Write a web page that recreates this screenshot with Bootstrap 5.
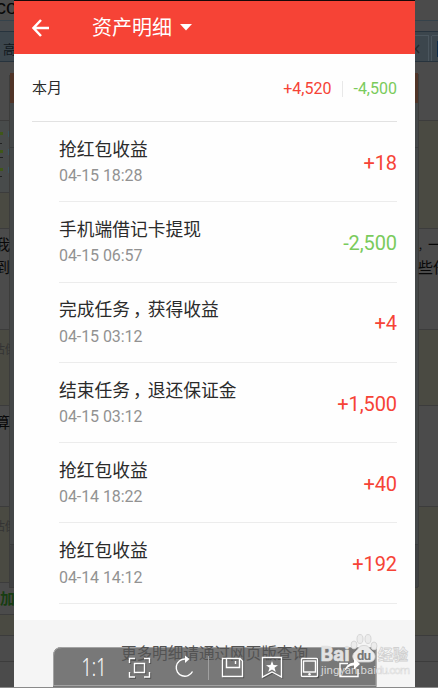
<!DOCTYPE html>
<html lang="zh-CN">
<head>
<meta charset="utf-8">
<meta name="viewport" content="width=device-width, initial-scale=1">
<title>资产明细</title>
<link href="https://cdn.jsdelivr.net/npm/bootstrap@5.3.0/dist/css/bootstrap.min.css" rel="stylesheet">
<style>
body{width:438px;height:688px;overflow:hidden;background:#4b4b4b;font-family:Roboto,"Noto Sans CJK SC",sans-serif;color:#2b2b2b}
.backdrop-art{width:438px;height:688px}
.phone{width:401px;height:687px;margin-left:14px;background:#fefefe}
.top-bar{height:54px;background:#f64336;border-top:1px solid #160808;padding-left:17px}
.top-title{font-size:20px;line-height:28px;margin-left:42px;padding-top:1px}
.caret-icon{margin-left:8px}
.summary{height:68px;margin:0 18px;padding-top:2px;border-bottom:1px solid #e2e2e2;font-size:15px}
.sum-num{font-size:16px}
.divider{width:1px;height:16px;background:#e8e8e8;margin:0 10px 0 11px}
.entry{height:80.3px;margin:0 18px 0 45px;border-bottom:1px solid #ececec}
.entry-title{font-size:17.75px;line-height:26px;height:26px;margin-top:14.9px}
.entry-time{font-size:16px;line-height:24px;color:#929292;margin-top:1.3px;letter-spacing:-.08px}
.amount{font-size:20px;line-height:24px;margin-top:2px;letter-spacing:-.1px}
.plus{color:#f64336}
.minus{color:#7acb5c}
.comma{display:inline-block;width:17.75px;text-indent:3px;line-height:20px;white-space:nowrap}
.foot{background:#f5f5f5}
.more-text{font-size:15.6px;line-height:22px;color:#535353;padding-top:23px;z-index:1}
.viewer-bar{left:53px;top:647px;width:324px;height:40px}
</style>
<script src="https://cdn.jsdelivr.net/npm/bootstrap@5.3.0/dist/js/bootstrap.bundle.min.js"></script>
</head>
<body class="position-relative">
<svg class="backdrop-art position-absolute top-0 start-0" viewBox="0 0 438 688" shape-rendering="crispEdges">
  <rect width="438" height="688" fill="#4b4b4b"/>
  <rect y="20" width="438" height="1" fill="#35424b"/>
  <rect y="21" width="438" height="10" fill="#484b4e"/>
  <rect y="31" width="438" height="31" fill="#3c464d"/>
  <rect y="31" width="438" height="1" fill="#27333d"/>
  <rect y="61" width="438" height="1" fill="#27333d"/>
  <path d="M415 35.500H427Q428.500 35.500 428.500 37V61M431.500 61V37Q431.500 35.500 433 35.500H438" fill="none" stroke="#4b565e"/>
  <rect x="437" y="41" width="1" height="16" fill="#102c49"/>
  <path d="M419 45L415.500 49L419 53" fill="none" stroke="#252c31" stroke-width="1.500" shape-rendering="auto"/>
  <g fill="#4a4a42"><rect y="121" width="438" height="107"/><rect y="329" width="438" height="76"/><rect y="506" width="438" height="76"/><rect y="614" width="438" height="21"/><rect x="415" y="582" width="23" height="53"/></g>
  <rect y="121" width="9" height="71" fill="#484b4b"/>
  <g fill="#3c3c3c"><rect y="120" width="438" height="1"/><rect y="192" width="10" height="1"/><rect y="228" width="438" height="1"/><rect y="329" width="438" height="1"/><rect y="405" width="438" height="1"/><rect y="506" width="438" height="1"/><rect y="582" width="14" height="1"/><rect y="614" width="14" height="1"/><rect y="635" width="438" height="1"/><rect y="661" width="438" height="1"/></g>
  <path d="M0 133.500H3M0 151.500H3M0 169.500H3" stroke="#3f5719" stroke-width="3"/>
  <path d="M0 143.500H2M0 157.500H3M0 176.500H2" stroke="#222"/>
  <path d="M8 131V137M8 149V155M8 167V173" stroke="#3b5660" stroke-width="1"/>
  <rect x="9" y="74" width="410" height="514" fill="#3c3c3b" rx="2"/>
  <rect x="10" y="73" width="408" height="514" fill="#444748" rx="2"/>
  <rect x="10" y="73" width="408" height="30" fill="#503427"/>
  <rect x="10" y="147" width="408" height="1" fill="#393c3d"/>
  <rect x="10" y="544" width="408" height="1" fill="#393b3c"/>
  <rect x="10" y="545" width="408" height="42" fill="#3f4142" rx="2"/>
  <rect y="687" width="438" height="1" fill="#8a8a8a"/>
  <g font-family="'Noto Sans CJK SC',sans-serif" fill="#080808">
    <text x="-4" y="14" font-family="Liberation Sans,sans-serif" font-size="20">co</text>
    <text x="3" y="54" font-size="13" fill="#11181d">高</text>
    <svg x="0" y="230" width="10" height="310" viewBox="0 230 10 310">
      <text x="-5" y="250" font-size="15">我</text><text x="-5" y="273" font-size="15">到</text>
      <text x="-7" y="354" font-size="12" fill="#343434">估倒</text>
      <text x="-5" y="428" font-size="15">算</text>
      <text x="-7" y="531" font-size="12" fill="#343434">估倒</text>
    </svg>
    <text x="0" y="604" font-size="15" font-weight="700" fill="#173d12">加</text>
    <text x="418" y="250" font-size="10">，</text><text x="428" y="250" font-size="15">一</text>
    <text x="418" y="273" font-size="15">些任</text>
  </g>
</svg>

<main class="phone position-relative d-flex flex-column">
  <header class="top-bar d-flex align-items-center text-white flex-shrink-0">
    <svg width="19" height="20" viewBox="0 0 19 20" fill="none" stroke="#fff" stroke-width="2.500"><path d="M10 2L2.500 10L10 18M3 10H18"/></svg>
    <div class="top-title">资产明细</div>
    <svg class="caret-icon" width="12" height="7" viewBox="0 0 12 7"><path d="M0 0H12L6 6.500Z" fill="#fff"/></svg>
  </header>
  <section class="summary d-flex align-items-center flex-shrink-0">
    <span class="me-auto">本月</span>
    <span class="plus sum-num">+4,520</span><span class="divider"></span><span class="minus sum-num">-4,500</span>
  </section>
  <section class="flex-shrink-0">
    <div class="entry d-flex justify-content-between align-items-center"><div class="align-self-start"><div class="entry-title">抢红包收益</div><div class="entry-time">04-15 18:28</div></div><div class="amount plus">+18</div></div>
    <div class="entry d-flex justify-content-between align-items-center"><div class="align-self-start"><div class="entry-title">手机端借记卡提现</div><div class="entry-time">04-15 06:57</div></div><div class="amount minus">-2,500</div></div>
    <div class="entry d-flex justify-content-between align-items-center"><div class="align-self-start"><div class="entry-title">完成任务<span class="comma">，</span>获得收益</div><div class="entry-time">04-15 03:12</div></div><div class="amount plus">+4</div></div>
    <div class="entry d-flex justify-content-between align-items-center"><div class="align-self-start"><div class="entry-title">结束任务<span class="comma">，</span>退还保证金</div><div class="entry-time">04-15 03:12</div></div><div class="amount plus">+1,500</div></div>
    <div class="entry d-flex justify-content-between align-items-center"><div class="align-self-start"><div class="entry-title">抢红包收益</div><div class="entry-time">04-14 18:22</div></div><div class="amount plus">+40</div></div>
    <div class="entry d-flex justify-content-between align-items-center"><div class="align-self-start"><div class="entry-title">抢红包收益</div><div class="entry-time">04-14 14:12</div></div><div class="amount plus">+192</div></div>
  </section>
  <footer class="foot flex-grow-1 mt-3"><div class="more-text position-relative text-center text-nowrap">更多明细请通过网页版查询</div></footer>
</main>

<svg class="viewer-bar position-absolute" viewBox="53 647 324 40">
  <path d="M53 687V656Q53 647 62 647H376.500V687Z" fill="#555" fill-opacity=".78"/>
  <path d="M53.500 686V656Q53.500 647.500 62 647.500H376V685.500H53.500" fill="none" stroke="#a3a3a3"/>
</svg>
<svg class="backdrop-art position-absolute top-0 start-0 z-2" viewBox="0 0 438 688">
  <g fill="#e2e2e2">
    <text x="320.500" y="661" font-family="Roboto,sans-serif" font-weight="700" font-size="20" stroke="#e2e2e2" stroke-width=".6" textLength="29" lengthAdjust="spacingAndGlyphs">Bai</text>
    <g stroke="#cfcfcf" stroke-width=".8" fill="#ececec"><ellipse cx="354" cy="645" rx="3" ry="4"/><ellipse cx="360" cy="639" rx="3" ry="4.500"/><ellipse cx="368" cy="639" rx="3" ry="4.500"/><ellipse cx="374" cy="646" rx="3" ry="4"/><path d="M364 645.500C358 645.500 359 649 355 652C350 656 354 663 360 662H369C375 662 377 656 373 652C369 649 370 645.500 364 645.500Z"/></g>
    <text x="378" y="660" font-family="'Noto Sans CJK SC',sans-serif" font-weight="700" font-size="15" fill="#f7f7f7" stroke="#d0d0d0" stroke-width=".8">经验</text>
    <text x="321" y="674" font-family="Roboto,sans-serif" font-size="11.500" fill="#d6d6d6"><tspan textLength="55">jingyan.bai</tspan><tspan x="376" textLength="34" fill="#fafafa" stroke="#dcdcdc" stroke-width=".6">du.com</tspan></text>
  </g>
  <text x="357" y="660" font-family="Roboto,sans-serif" font-weight="700" font-size="13" fill="#777" textLength="14">du</text>
  <g fill="none" stroke="#353535" stroke-width="1.300" transform="translate(1 1)" opacity=".6">
    <path d="M129.500 663V658.500H135M144 658.500H149.500V663M149.500 672V677H144M135 677H129.500V672M134.500 663.500H144.500V672.500H134.500ZM222.500 658.500H240L242.500 661V676.500H222.500ZM262.500 657.500H281.500V677L272 672L262.500 677ZM301.500 658.500H317.500V676.500H301.500Z"/>
  </g>
  <g fill="none" stroke="#fff" stroke-width="1.400">
    <path d="M129.500 663V658.500H135M144 658.500H149.500V663M149.500 672V677H144M135 677H129.500V672M134.500 663.500H144.500V672.500H134.500Z"/>
    <path d="M185 659A8.600 8.600 0 1 0 192.500 671.500"/><path d="M185 655.500L189.500 659L185 663Z" fill="#fff" stroke="none"/>
    <path d="M222.500 658.500H240L242.500 661V676.500H222.500ZM226.500 658.500V667.500H239.500V658.500M235.500 661V664"/>
    <path d="M262.500 657.500H281.500V677L272 672L262.500 677Z"/>
    <path d="M272 661L273.500 665L278 665.200L274.500 667.700L275.800 672L272 669.500L268.200 672L269.500 667.700L266 665.200L270.500 665Z" fill="#fff" stroke="none"/>
    <rect x="301.500" y="658.500" width="16" height="18" rx="1"/><rect x="303.500" y="661" width="12" height="11"/><circle cx="309.500" cy="674.300" r="1.200" fill="#fff" stroke="none"/>
    <path d="M348 663.500H340V676.500H358V669"/>
    <path d="M344 672Q346 663 354 662.500V658.500L360 664L354 669.500V665.500Q348 665 344 672Z" fill="#fff" stroke="none"/>
  </g>
  <path d="M208.500 656V680" stroke="#a0a0a0"/>
  <text x="81.500" y="676" font-family="'Open Sans',sans-serif" font-weight="300" font-size="25" fill="#fff" stroke="#fff" stroke-width=".2" textLength="25" lengthAdjust="spacingAndGlyphs">1:1</text>
</svg>
</body>
</html>
